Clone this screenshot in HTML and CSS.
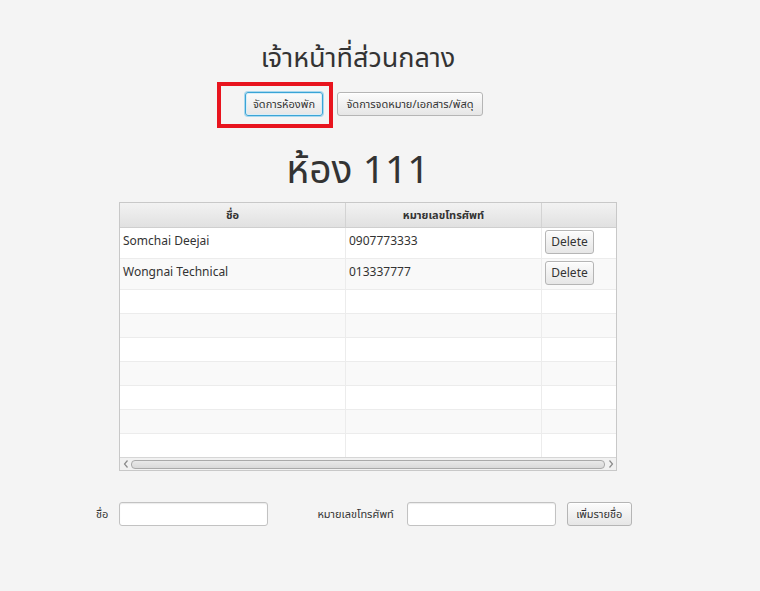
FILE: index.html
```html
<!DOCTYPE html>
<html lang="th">
<head>
<meta charset="utf-8">
<title>เจ้าหน้าที่ส่วนกลาง</title>
<link rel="stylesheet" href="styles.css">
</head>
<body>
<div class="page">
  <h1 class="title">เจ้าหน้าที่ส่วนกลาง</h1>
  <div class="tabs">
    <button class="btn btn-focus">จัดการห้องพัก</button>
    <button class="btn">จัดการจดหมาย/เอกสาร/พัสดุ</button>
    <span class="highlight"></span>
  </div>
  <h2 class="room">ห้อง 111</h2>
  <div class="table">
    <div class="thead">
      <div class="th c1">ชื่อ</div>
      <div class="th c2">หมายเลขโทรศัพท์</div>
      <div class="th c3"></div>
    </div>
    <div class="row tall">
      <div class="td c1">Somchai Deejai</div>
      <div class="td c2">0907773333</div>
      <div class="td c3"><button class="btn del">Delete</button></div>
    </div>
    <div class="row tall alt">
      <div class="td c1">Wongnai Technical</div>
      <div class="td c2">013337777</div>
      <div class="td c3"><button class="btn del">Delete</button></div>
    </div>
    <div class="row"><div class="td c1"></div><div class="td c2"></div><div class="td c3"></div></div>
    <div class="row alt"><div class="td c1"></div><div class="td c2"></div><div class="td c3"></div></div>
    <div class="row"><div class="td c1"></div><div class="td c2"></div><div class="td c3"></div></div>
    <div class="row alt"><div class="td c1"></div><div class="td c2"></div><div class="td c3"></div></div>
    <div class="row"><div class="td c1"></div><div class="td c2"></div><div class="td c3"></div></div>
    <div class="row alt"><div class="td c1"></div><div class="td c2"></div><div class="td c3"></div></div>
    <div class="row last"><div class="td c1"></div><div class="td c2"></div><div class="td c3"></div></div>
    <div class="hscroll">
      <span class="arrow">
        <svg width="6" height="8" viewBox="0 0 6 8"><path d="M4.5 0.5 L1.5 4 L4.5 7.5" fill="none" stroke="#8a8a8a" stroke-width="1.2"/></svg>
      </span>
      <span class="thumb"></span>
      <span class="arrow">
        <svg width="6" height="8" viewBox="0 0 6 8"><path d="M1.5 0.5 L4.5 4 L1.5 7.5" fill="none" stroke="#8a8a8a" stroke-width="1.2"/></svg>
      </span>
    </div>
  </div>
  <div class="form">
    <label class="lbl lbl-name">ชื่อ</label>
    <input class="field" type="text">
    <label class="lbl lbl-phone">หมายเลขโทรศัพท์</label>
    <input class="field" type="text">
    <button class="btn add">เพิ่มรายชื่อ</button>
  </div>
</div>
</body>
</html>
```

FILE: styles.css
```css
* { box-sizing: border-box; }
html, body {
  margin: 0;
  padding: 0;
  background: #f4f4f4;
}
body {
  font-family: "Noto Sans", "Open Sans", "Noto Sans Thai", sans-serif;
  color: #333;
  width: 760px;
  height: 591px;
  overflow: hidden;
}
.page {
  display: flex;
  flex-direction: column;
  align-items: flex-start;
}
.title {
  margin: 37px 0 0 0;
  width: 716px;
  text-align: center;
  font-weight: normal;
  font-size: 27px;
  line-height: 40px;
  color: #333;
}
.tabs {
  position: relative;
  display: flex;
  gap: 14px;
  margin: 15px 0 0 245px;
}
.btn {
  font-family: inherit;
  font-size: 11px;
  color: #333;
  height: 24px;
  padding: 0 7px;
  border: 1px solid #b5b5b5;
  border-radius: 3px;
  background: linear-gradient(#fcfcfc, #e6e6e6);
  box-shadow: inset 0 1px 0 #ffffff;
  line-height: 20px;
  white-space: nowrap;
  cursor: default;
}
.tabs .btn { width: 78px; padding: 0; }
.tabs .btn + .btn { width: 146px; }
.btn-focus {
  border-color: #3aa4d6;
  box-shadow: 0 0 0 1px #a9d8ee, inset 0 0 0 1px #d8eef8;
}
.highlight {
  position: absolute;
  left: -28px;
  top: -10px;
  width: 116px;
  height: 46px;
  border: 4px solid #e8141e;
  pointer-events: none;
}
.room {
  margin: 27px 0 0 0;
  width: 716px;
  text-align: center;
  font-weight: normal;
  font-size: 39px;
  line-height: 50px;
  color: #333;
}
.table {
  margin: 9px 0 0 119px;
  width: 498px;
  border: 1px solid #c8c8c8;
  background: #ffffff;
  display: flex;
  flex-direction: column;
}
.thead {
  display: flex;
  height: 25px;
  background: linear-gradient(#f2f2f2, #e1e1e1);
  border-bottom: 1px solid #cfcfcf;
}
.th {
  font-size: 11px;
  font-weight: bold;
  text-align: center;
  line-height: 24px;
  border-right: 1px solid #d3d3d3;
}
.c1 { width: 226px; flex: none; }
.c2 { width: 196px; flex: none; }
.c3 { flex: 1; border-right: none !important; }
.row {
  display: flex;
  height: 24px;
  border-bottom: 1px solid #ececec;
  background: #ffffff;
}
.row.alt { background: #f9f9f9; }
.row.tall { height: 31px; }
.row.last { border-bottom: 1px solid #d6d6d6; }
.td {
  border-right: 1px solid #ececec;
  font-size: 12px;
  padding: 5px 0 0 3px;
  line-height: 16px;
  white-space: nowrap;
}
.td.c3 { padding: 2px 0 0 3px; }
.del {
  font-size: 12px;
  width: 49px;
  padding: 0;
  height: 24px;
  line-height: 22px;
}
.hscroll {
  display: flex;
  align-items: center;
  height: 12px;
  background: #f1f1f1;
}
.arrow {
  width: 11px;
  display: flex;
  justify-content: center;
  align-items: center;
}
.thumb {
  flex: 1;
  height: 9px;
  border: 1px solid #a9a9a9;
  border-radius: 4px;
  background: linear-gradient(#e9e9e9, #d9d9d9);
}
.form {
  display: flex;
  align-items: center;
  margin: 31px 0 0 0;
  padding-left: 96px;
}
.lbl {
  font-size: 11px;
  color: #333;
}
.lbl-name { margin-right: 11px; }
.lbl-phone { margin: 0 13px 0 49px; }
.field {
  width: 149px;
  height: 24px;
  border: 1px solid #c2c2c2;
  border-radius: 3px;
  background: #ffffff;
  box-shadow: inset 0 1px 1px #ececec;
  padding: 0 6px;
  font-family: inherit;
  font-size: 12px;
  outline: none;
}
.add {
  margin-left: 11px;
  width: 65px;
  padding: 0;
}
```
